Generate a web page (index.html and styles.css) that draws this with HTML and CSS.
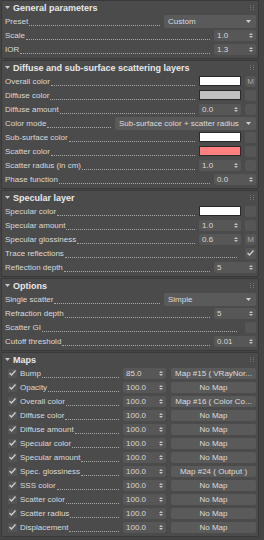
FILE: index.html
```html
<!DOCTYPE html>
<html lang="en">
<head>
  <meta charset="UTF-8">
  <title>Material parameters</title>
  <link rel="stylesheet" href="styles.css">
</head>
<body>
  <div class="panels">

    <div class="rollout">
      <div class="rollout-head">
        <svg class="caret" width="5" height="3"><polygon points="0,0 5,0 2.5,3" /></svg>
        <span>General parameters</span>
        <svg class="grip" width="5" height="5"><rect x="0" y="0" width="1" height="1"/><rect x="3" y="0" width="1" height="1"/><rect x="0" y="2" width="1" height="1"/><rect x="3" y="2" width="1" height="1"/><rect x="0" y="4" width="1" height="1"/><rect x="3" y="4" width="1" height="1"/></svg>
      </div>
      <div class="row"><span class="label">Preset</span><span class="dots"></span>
        <div class="dropdown">Custom<svg width="5" height="3"><polygon points="0,0 5,0 2.5,3" /></svg></div></div>
      <div class="row"><span class="label">Scale</span><span class="dots"></span>
        <div class="spin"><span>1.0</span><svg width="4" height="7"><polygon points="0,3 2,1 4,3"/><polygon points="0,4 2,6 4,4"/></svg></div></div>
      <div class="row"><span class="label">IOR</span><span class="dots"></span>
        <div class="spin"><span>1.3</span><svg width="4" height="7"><polygon points="0,3 2,1 4,3"/><polygon points="0,4 2,6 4,4"/></svg></div></div>
    </div>

    <div class="rollout">
      <div class="rollout-head">
        <svg class="caret" width="5" height="3"><polygon points="0,0 5,0 2.5,3" /></svg>
        <span>Diffuse and sub-surface scattering layers</span>
        <svg class="grip" width="5" height="5"><rect x="0" y="0" width="1" height="1"/><rect x="3" y="0" width="1" height="1"/><rect x="0" y="2" width="1" height="1"/><rect x="3" y="2" width="1" height="1"/><rect x="0" y="4" width="1" height="1"/><rect x="3" y="4" width="1" height="1"/></svg>
      </div>
      <div class="row"><span class="label">Overall color</span><span class="dots"></span>
        <div class="swatch white"></div><div class="sq">M</div></div>
      <div class="row"><span class="label">Diffuse color</span><span class="dots"></span>
        <div class="swatch grey"></div><div class="sq"></div></div>
      <div class="row"><span class="label">Diffuse amount</span><span class="dots"></span>
        <div class="spin"><span>0.0</span><svg width="4" height="7"><polygon points="0,3 2,1 4,3"/><polygon points="0,4 2,6 4,4"/></svg></div><div class="sq"></div></div>
      <div class="row"><span class="label">Color mode</span><span class="dots"></span>
        <div class="dropdown wide">Sub-surface color + scatter radius<svg width="5" height="3"><polygon points="0,0 5,0 2.5,3" /></svg></div></div>
      <div class="row"><span class="label">Sub-surface color</span><span class="dots"></span>
        <div class="swatch white"></div><div class="sq"></div></div>
      <div class="row"><span class="label">Scatter color</span><span class="dots"></span>
        <div class="swatch red"></div><div class="sq"></div></div>
      <div class="row"><span class="label">Scatter radius (in cm)</span><span class="dots"></span>
        <div class="spin"><span>1.0</span><svg width="4" height="7"><polygon points="0,3 2,1 4,3"/><polygon points="0,4 2,6 4,4"/></svg></div><div class="sq"></div></div>
      <div class="row"><span class="label">Phase function</span><span class="dots"></span>
        <div class="spin"><span>0.0</span><svg width="4" height="7"><polygon points="0,3 2,1 4,3"/><polygon points="0,4 2,6 4,4"/></svg></div></div>
    </div>

    <div class="rollout">
      <div class="rollout-head">
        <svg class="caret" width="5" height="3"><polygon points="0,0 5,0 2.5,3" /></svg>
        <span>Specular layer</span>
        <svg class="grip" width="5" height="5"><rect x="0" y="0" width="1" height="1"/><rect x="3" y="0" width="1" height="1"/><rect x="0" y="2" width="1" height="1"/><rect x="3" y="2" width="1" height="1"/><rect x="0" y="4" width="1" height="1"/><rect x="3" y="4" width="1" height="1"/></svg>
      </div>
      <div class="row"><span class="label">Specular color</span><span class="dots"></span>
        <div class="swatch white"></div><div class="sq"></div></div>
      <div class="row"><span class="label">Specular amount</span><span class="dots"></span>
        <div class="spin"><span>1.0</span><svg width="4" height="7"><polygon points="0,3 2,1 4,3"/><polygon points="0,4 2,6 4,4"/></svg></div><div class="sq"></div></div>
      <div class="row"><span class="label">Specular glossiness</span><span class="dots"></span>
        <div class="spin"><span>0.6</span><svg width="4" height="7"><polygon points="0,3 2,1 4,3"/><polygon points="0,4 2,6 4,4"/></svg></div><div class="sq">M</div></div>
      <div class="row"><span class="label">Trace reflections</span><span class="dots"></span>
        <div class="sq"><svg width="7" height="6"><polyline points="0.5,3 2.5,5 6.5,0.5" /></svg></div></div>
      <div class="row"><span class="label">Reflection depth</span><span class="dots"></span>
        <div class="spin"><span>5</span><svg width="4" height="7"><polygon points="0,3 2,1 4,3"/><polygon points="0,4 2,6 4,4"/></svg></div></div>
    </div>

    <div class="rollout">
      <div class="rollout-head">
        <svg class="caret" width="5" height="3"><polygon points="0,0 5,0 2.5,3" /></svg>
        <span>Options</span>
        <svg class="grip" width="5" height="5"><rect x="0" y="0" width="1" height="1"/><rect x="3" y="0" width="1" height="1"/><rect x="0" y="2" width="1" height="1"/><rect x="3" y="2" width="1" height="1"/><rect x="0" y="4" width="1" height="1"/><rect x="3" y="4" width="1" height="1"/></svg>
      </div>
      <div class="row"><span class="label">Single scatter</span><span class="dots"></span>
        <div class="dropdown">Simple<svg width="5" height="3"><polygon points="0,0 5,0 2.5,3" /></svg></div></div>
      <div class="row"><span class="label">Refraction depth</span><span class="dots"></span>
        <div class="spin"><span>5</span><svg width="4" height="7"><polygon points="0,3 2,1 4,3"/><polygon points="0,4 2,6 4,4"/></svg></div></div>
      <div class="row"><span class="label">Scatter GI</span><span class="dots"></span>
        <div class="sq"></div></div>
      <div class="row"><span class="label">Cutoff threshold</span><span class="dots"></span>
        <div class="spin"><span>0.01</span><svg width="4" height="7"><polygon points="0,3 2,1 4,3"/><polygon points="0,4 2,6 4,4"/></svg></div></div>
    </div>

    <div class="rollout">
      <div class="rollout-head">
        <svg class="caret" width="5" height="3"><polygon points="0,0 5,0 2.5,3" /></svg>
        <span>Maps</span>
        <svg class="grip" width="5" height="5"><rect x="0" y="0" width="1" height="1"/><rect x="3" y="0" width="1" height="1"/><rect x="0" y="2" width="1" height="1"/><rect x="3" y="2" width="1" height="1"/><rect x="0" y="4" width="1" height="1"/><rect x="3" y="4" width="1" height="1"/></svg>
      </div>
      <div class="row map"><span class="check"><svg width="7" height="6"><polyline points="0.5,3 2.5,5 6.5,0.5" /></svg></span><span class="label">Bump</span><span class="dots"></span>
        <div class="spin"><span>85.0</span><svg width="4" height="7"><polygon points="0,3 2,1 4,3"/><polygon points="0,4 2,6 4,4"/></svg></div><div class="mapbtn">Map #15 ( VRayNor...</div></div>
      <div class="row map"><span class="check"><svg width="7" height="6"><polyline points="0.5,3 2.5,5 6.5,0.5" /></svg></span><span class="label">Opacity</span><span class="dots"></span>
        <div class="spin"><span>100.0</span><svg width="4" height="7"><polygon points="0,3 2,1 4,3"/><polygon points="0,4 2,6 4,4"/></svg></div><div class="mapbtn">No Map</div></div>
      <div class="row map"><span class="check"><svg width="7" height="6"><polyline points="0.5,3 2.5,5 6.5,0.5" /></svg></span><span class="label">Overall color</span><span class="dots"></span>
        <div class="spin"><span>100.0</span><svg width="4" height="7"><polygon points="0,3 2,1 4,3"/><polygon points="0,4 2,6 4,4"/></svg></div><div class="mapbtn">Map #16 ( Color Co...</div></div>
      <div class="row map"><span class="check"><svg width="7" height="6"><polyline points="0.5,3 2.5,5 6.5,0.5" /></svg></span><span class="label">Diffuse color</span><span class="dots"></span>
        <div class="spin"><span>100.0</span><svg width="4" height="7"><polygon points="0,3 2,1 4,3"/><polygon points="0,4 2,6 4,4"/></svg></div><div class="mapbtn">No Map</div></div>
      <div class="row map"><span class="check"><svg width="7" height="6"><polyline points="0.5,3 2.5,5 6.5,0.5" /></svg></span><span class="label">Diffuse amount</span><span class="dots"></span>
        <div class="spin"><span>100.0</span><svg width="4" height="7"><polygon points="0,3 2,1 4,3"/><polygon points="0,4 2,6 4,4"/></svg></div><div class="mapbtn">No Map</div></div>
      <div class="row map"><span class="check"><svg width="7" height="6"><polyline points="0.5,3 2.5,5 6.5,0.5" /></svg></span><span class="label">Specular color</span><span class="dots"></span>
        <div class="spin"><span>100.0</span><svg width="4" height="7"><polygon points="0,3 2,1 4,3"/><polygon points="0,4 2,6 4,4"/></svg></div><div class="mapbtn">No Map</div></div>
      <div class="row map"><span class="check"><svg width="7" height="6"><polyline points="0.5,3 2.5,5 6.5,0.5" /></svg></span><span class="label">Specular amount</span><span class="dots"></span>
        <div class="spin"><span>100.0</span><svg width="4" height="7"><polygon points="0,3 2,1 4,3"/><polygon points="0,4 2,6 4,4"/></svg></div><div class="mapbtn">No Map</div></div>
      <div class="row map"><span class="check"><svg width="7" height="6"><polyline points="0.5,3 2.5,5 6.5,0.5" /></svg></span><span class="label">Spec. glossiness</span><span class="dots"></span>
        <div class="spin"><span>100.0</span><svg width="4" height="7"><polygon points="0,3 2,1 4,3"/><polygon points="0,4 2,6 4,4"/></svg></div><div class="mapbtn">Map #24 ( Output )</div></div>
      <div class="row map"><span class="check"><svg width="7" height="6"><polyline points="0.5,3 2.5,5 6.5,0.5" /></svg></span><span class="label">SSS color</span><span class="dots"></span>
        <div class="spin"><span>100.0</span><svg width="4" height="7"><polygon points="0,3 2,1 4,3"/><polygon points="0,4 2,6 4,4"/></svg></div><div class="mapbtn">No Map</div></div>
      <div class="row map"><span class="check"><svg width="7" height="6"><polyline points="0.5,3 2.5,5 6.5,0.5" /></svg></span><span class="label">Scatter color</span><span class="dots"></span>
        <div class="spin"><span>100.0</span><svg width="4" height="7"><polygon points="0,3 2,1 4,3"/><polygon points="0,4 2,6 4,4"/></svg></div><div class="mapbtn">No Map</div></div>
      <div class="row map"><span class="check"><svg width="7" height="6"><polyline points="0.5,3 2.5,5 6.5,0.5" /></svg></span><span class="label">Scatter radius</span><span class="dots"></span>
        <div class="spin"><span>100.0</span><svg width="4" height="7"><polygon points="0,3 2,1 4,3"/><polygon points="0,4 2,6 4,4"/></svg></div><div class="mapbtn">No Map</div></div>
      <div class="row map"><span class="check"><svg width="7" height="6"><polyline points="0.5,3 2.5,5 6.5,0.5" /></svg></span><span class="label">Displacement</span><span class="dots"></span>
        <div class="spin"><span>100.0</span><svg width="4" height="7"><polygon points="0,3 2,1 4,3"/><polygon points="0,4 2,6 4,4"/></svg></div><div class="mapbtn">No Map</div></div>
    </div>

  </div>
</body>
</html>
```

FILE: styles.css
```css
body {
  margin: 0;
  background-color: #444444;
  font-family: "Liberation Sans", Arial, sans-serif;
  font-size: 8px;
  color: #dadada;
}
.panels {
  padding: 0 5px 0 1px;
}
.rollout {
  background-color: #4b4b4b;
  border: 1px solid #393939;
  border-radius: 2px;
  padding-bottom: 2px;
  margin-bottom: 1px;
}
.rollout-head {
  height: 13px;
  display: flex;
  align-items: center;
  padding: 0 3px;
  font-size: 9px;
  font-weight: bold;
  color: #e8e8e8;
}
.caret {
  fill: #c8c8c8;
  margin-right: 3px;
}
.grip {
  fill: #747474;
  margin-left: auto;
}
.row {
  height: 14px;
  display: flex;
  align-items: center;
  padding: 0 2px 0 3px;
}
.row.map {
  padding-left: 6px;
}
.label {
  white-space: nowrap;
}
.dots {
  flex: 1;
  min-width: 0;
  height: 8px;
  border-bottom: 1px dotted #a8a8a8;
  margin: 0 4px 0 1px;
}
.dropdown {
  width: 92px;
  height: 13px;
  box-sizing: border-box;
  background-color: #5a5a5a;
  border-radius: 2px;
  display: flex;
  align-items: center;
  justify-content: space-between;
  padding: 0 5px 0 4px;
  white-space: nowrap;
}
.dropdown.wide {
  width: 141px;
}
.dropdown svg {
  fill: #cfcfcf;
}
.spin {
  width: 42px;
  height: 11px;
  box-sizing: border-box;
  background-color: #575757;
  border-radius: 2px;
  display: flex;
  align-items: center;
  justify-content: space-between;
  padding: 0 3px 0 3px;
}
.spin svg {
  fill: #c4c4c4;
}
.map .spin {
  width: 43px;
}
.swatch {
  width: 42px;
  height: 10px;
  box-sizing: border-box;
  border: 1px solid #2a2a2a;
}
.swatch.white {
  background-color: #ffffff;
}
.swatch.grey {
  background-color: #c0c0c0;
}
.swatch.red {
  background-color: #ff8080;
}
.sq {
  width: 11px;
  height: 11px;
  background-color: #565656;
  border-radius: 2px;
  margin-left: 4px;
  display: flex;
  align-items: center;
  justify-content: center;
  font-size: 8px;
  color: #a8a8a8;
}
.sq svg,
.check svg {
  fill: none;
  stroke: #cfcfcf;
  stroke-width: 1.3;
}
.check {
  width: 9px;
  height: 9px;
  background-color: #555555;
  border-radius: 1px;
  display: flex;
  align-items: center;
  justify-content: center;
  margin-right: 3px;
}
.mapbtn {
  width: 85px;
  height: 11px;
  box-sizing: border-box;
  background-color: #5a5a5a;
  border-radius: 2px;
  margin-left: 5px;
  text-align: center;
  line-height: 11px;
  white-space: nowrap;
  overflow: hidden;
  color: #dcdcdc;
}
```
